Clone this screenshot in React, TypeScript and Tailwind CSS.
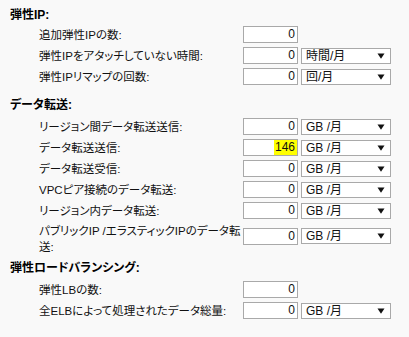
import React from "react";

const FONT = "[font-family:'Liberation_Sans','Noto_Sans_CJK_JP',sans-serif]";

function NumBox({ value, highlight }: { value: string; highlight?: boolean }) {
  return (
    <div className="w-[55px] h-[17px] border border-[#a9a9a9] bg-white flex items-stretch justify-end shrink-0 text-[12px] leading-[15px] text-[#111]">
      <span className={(highlight ? "bg-[#ffff00] " : "") + "pr-[2px] pl-[1px] flex items-center"}>{value}</span>
    </div>
  );
}

function Sel({ label }: { label: string }) {
  return (
    <div className="ml-[3px] w-[90px] h-[16px] border border-[#a9a9a9] bg-white flex items-center justify-between pl-[4px] pr-[5px] shrink-0 text-[12px] leading-[14px] text-[#111]">
      <span>{label}</span>
      <svg width="8" height="6" viewBox="0 0 8 6">
        <polygon points="0.5,0.5 7.5,0.5 4,5.8" fill="#111" />
      </svg>
    </div>
  );
}

function Row({ label, value, unit, highlight }: { label: string; value: string; unit?: string; highlight?: boolean }) {
  return (
    <div className="h-[21px] flex items-center">
      <div className="w-[233px] pl-[29px] shrink-0 whitespace-nowrap text-[11.5px] leading-[16px] text-[#111]">{label}</div>
      <NumBox value={value} highlight={highlight} />
      {unit ? <Sel label={unit} /> : null}
    </div>
  );
}

function Heading({ children }: { children: React.ReactNode }) {
  return <div className="h-[16px] text-[12px] leading-[16px] font-bold text-black">{children}</div>;
}

export default function App() {
  return (
    <div className={"w-[409px] h-[337px] bg-[#f9f9f9] pl-[10px] pt-[7px] [font-feature-settings:'palt'] " + FONT}>
      <Heading>弾性IP:</Heading>
      <div className="mt-[1px]">
        <Row label="追加弾性IPの数:" value="0" />
        <Row label="弾性IPをアタッチしていない時間:" value="0" unit="時間/月" />
        <Row label="弾性IPリマップの回数:" value="0" unit="回/月" />
      </div>

      <div className="mt-[10px]">
        <Heading>データ転送:</Heading>
        <div className="mt-[3px]">
          <Row label="リージョン間データ転送送信:" value="0" unit="GB /月" />
          <Row label="データ転送送信:" value="146" unit="GB /月" highlight />
          <Row label="データ転送受信:" value="0" unit="GB /月" />
          <Row label="VPCピア接続のデータ転送:" value="0" unit="GB /月" />
          <Row label="リージョン内データ転送:" value="0" unit="GB /月" />
          <div className="h-[36px] flex items-start">
            <div className="w-[233px] pl-[29px] pt-[2px] shrink-0 whitespace-nowrap text-[11.5px] leading-[16px] text-[#111]">
              パブリックIP /エラスティックIPのデータ転<br />送:
            </div>
            <div className="mt-[7px] flex">
              <NumBox value="0" />
              <Sel label="GB /月" />
            </div>
          </div>
        </div>
      </div>

      <div className="mt-[3px]">
        <Heading>弾性ロードバランシング:</Heading>
        <div className="mt-[3px]">
          <Row label="弾性LBの数:" value="0" />
          <Row label="全ELBによって処理されたデータ総量:" value="0" unit="GB /月" />
        </div>
      </div>
    </div>
  );
}
